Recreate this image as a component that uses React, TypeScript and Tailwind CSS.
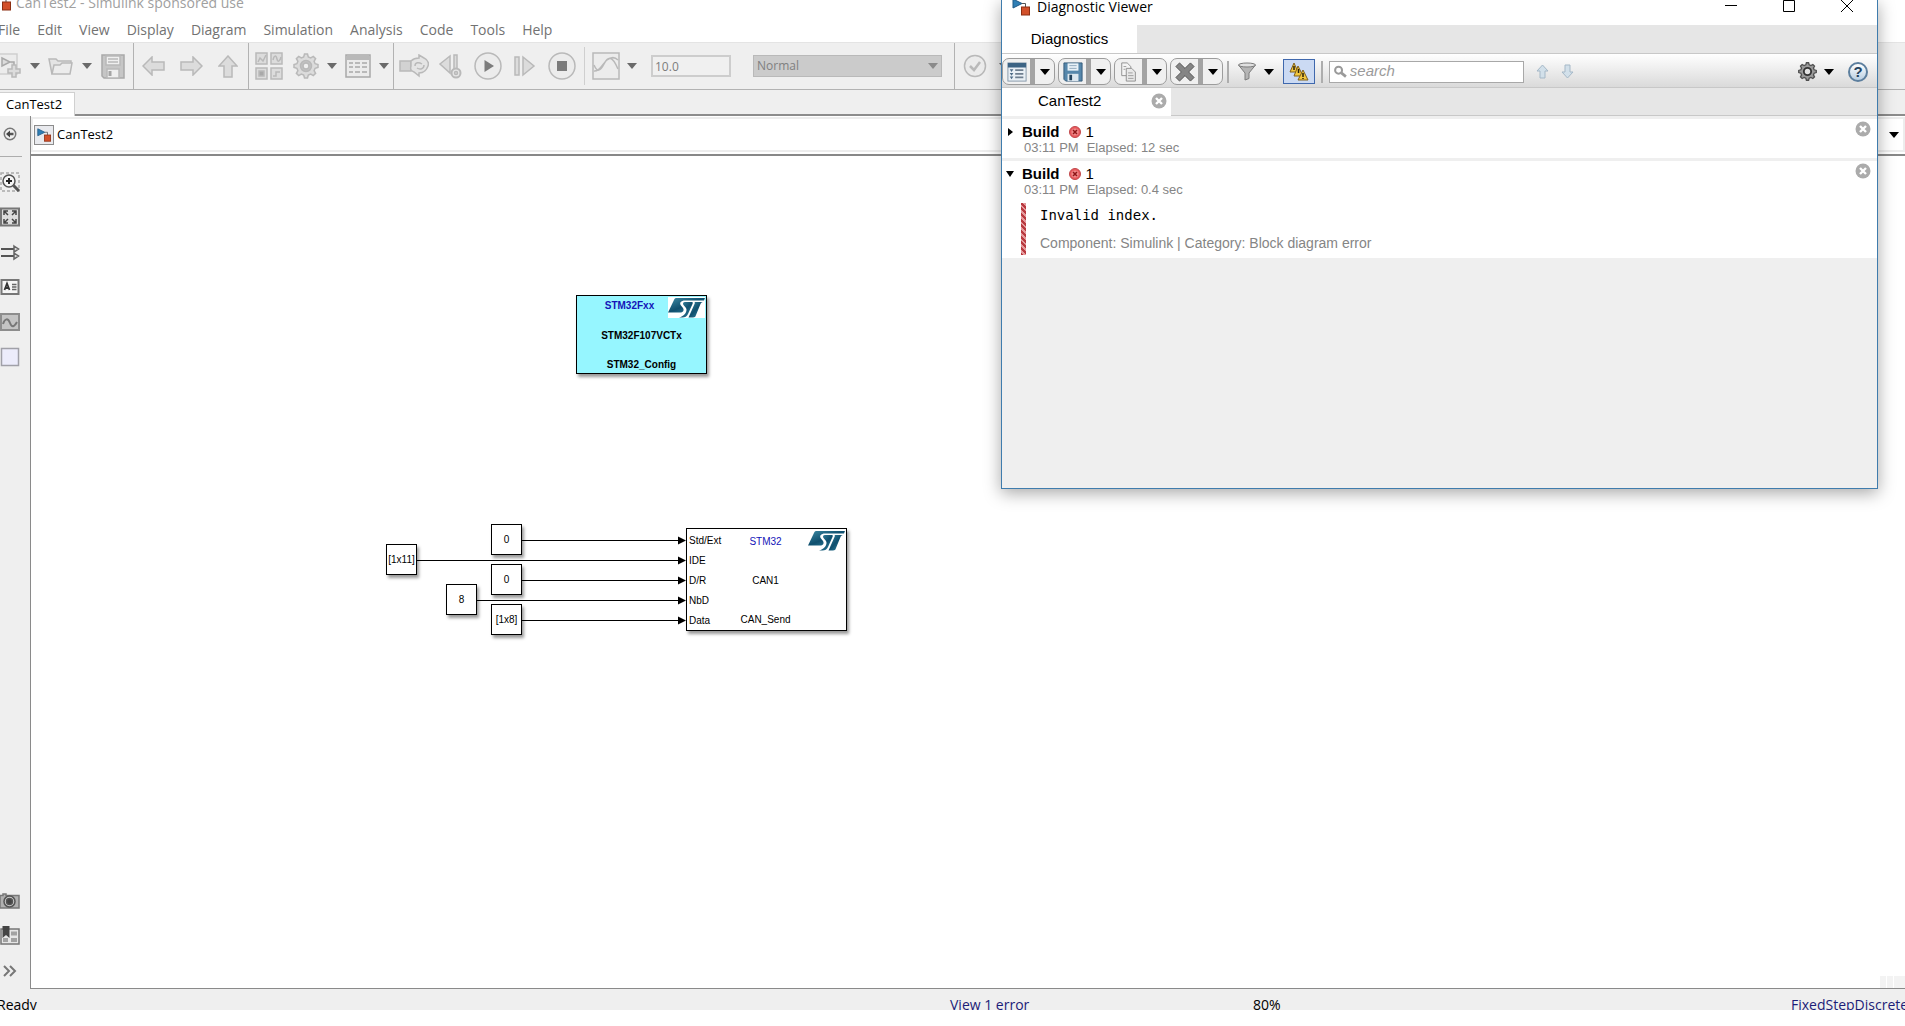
import type { ReactNode } from 'react';

const MENUS = ['File', 'Edit', 'View', 'Display', 'Diagram', 'Simulation', 'Analysis', 'Code', 'Tools', 'Help'];

/* ---------- shared icons ---------- */

function Caret({ className = 'text-[#6a6a6a]' }: { className?: string }) {
  return (
    <svg width="10" height="6" viewBox="0 0 10 6" className={className}>
      <path d="M0 0H10L5 6Z" fill="currentColor" />
    </svg>
  );
}

function ModelIcon({ size = 18 }: { size?: number }) {
  return (
    <svg width={size} height={size} viewBox="0 0 18 18" className="shrink-0">
      <path d="M1 1L10 5.5L1 10Z" fill="#2f7fb5" stroke="#1f5a86" />
      <path d="M10 5.5H13.5V9" fill="none" stroke="#555" />
      <rect x="9.5" y="9" width="8" height="8" fill="#d2502a" stroke="#8c2f12" />
    </svg>
  );
}

function CloseBadge() {
  return (
    <svg width="16" height="16" viewBox="0 0 16 16">
      <circle cx="8" cy="8" r="7.5" fill="#ababab" />
      <path d="M5 5L11 11M11 5L5 11" stroke="#fff" strokeWidth="2.4" />
    </svg>
  );
}

function ErrorBadge() {
  return (
    <svg width="12" height="12" viewBox="0 0 12 12">
      <circle cx="6" cy="6" r="5.5" fill="#e8595d" stroke="#c0484b" />
      <circle cx="6" cy="6" r="3.6" fill="#f08a8a" />
      <path d="M4 4L8 8M8 4L4 8" stroke="#8e1518" strokeWidth="1.5" />
    </svg>
  );
}

function StLogo() {
  return (
    <svg width="37" height="21" viewBox="0 0 37 21">
      <defs>
        <linearGradient id="st" x1="0" y1="0" x2="1" y2="1">
          <stop offset="0" stopColor="#3d8ba5" />
          <stop offset="0.5" stopColor="#0f4f6e" />
          <stop offset="1" stopColor="#3f93ad" />
        </linearGradient>
      </defs>
      <path d="M8 1H37L36 3.500H17C13 3.500 11 6 13 8.500L15 11C16.500 13.500 15 15.500 12 15.500H0L5.500 4C6.300 2 7 1 8 1Z" fill="url(#st)" />
      <path d="M17 5H24C25 5 25 6 24.500 7L20 17C19 19.500 17 20.500 14.500 20.500H11C16 19.500 20 14.500 18 11L15.500 8C14.500 6.500 15 5 17 5Z" fill="url(#st)" />
      <path d="M26.500 5H35C33.500 5.300 33 6 32.500 7L28 18C27.500 19.800 26.500 20.500 25 20.500H20.500L26.500 7C27 6 27 5.500 26.500 5Z" fill="url(#st)" />
    </svg>
  );
}

/* ---------- main toolbar icons, all greyed out ---------- */

function Grey({ w, h, children }: { w: number; h: number; children: ReactNode }) {
  return (
    <svg width={w} height={h} viewBox={`0 0 ${w} ${h}`} fill="#dcdcdc" stroke="#b9b9b9" strokeWidth="1.5" className="shrink-0">
      {children}
    </svg>
  );
}

const GEAR =
  'M11.500 1h3l.8 2.900 2.400 1 2.600-1.500 2.300 2.300-1.500 2.600 1 2.400 2.900.8v3l-2.900.8-1 2.400 1.500 2.600-2.300 2.300-2.600-1.500-2.400 1-.8 2.900h-3l-.8-2.900-2.400-1-2.600 1.500-2.300-2.300 1.500-2.600-1-2.400-2.900-.8v-3l2.900-.8 1-2.400-1.500-2.600 2.300-2.300 2.600 1.500 2.400-1z';

const icons: Record<string, ReactNode> = {
  New: (
    <Grey w={26} h={26}>
      <path d="M1 1H21V21H1Z" fill="#ececec" stroke="#cfcfcf" />
      <path d="M6 5L14 9L6 13Z M14 9H18V14" stroke="#a8a8a8" />
      <path d="M16 12h4v4h4v4h-4v4h-4v-4h-4v-4h4z" />
    </Grey>
  ),
  Open: (
    <Grey w={26} h={20}>
      <path d="M4 18L1 3H8L10 5H23V8" fill="#e4e4e4" />
      <path d="M4 18L6 9H12L14 7H24L22 18Z" fill="#ececec" />
    </Grey>
  ),
  Save: (
    <Grey w={24} h={25}>
      <path d="M1 1H23V24H3L1 22Z" fill="#c6c6c6" stroke="#a9a9a9" />
      <rect x="5" y="2" width="14" height="9" fill="#efefef" />
      <path d="M7 5H17M7 8H17" />
      <rect x="6" y="15" width="12" height="9" fill="#efefef" />
      <path d="M9 17V22" strokeWidth="3" stroke="#a5a5a5" />
    </Grey>
  ),
  Back: (
    <Grey w={24} h={20}>
      <path d="M1 10L10 1V6H22V14H10V19Z" />
    </Grey>
  ),
  Forward: (
    <Grey w={24} h={20}>
      <path d="M23 10L14 1V6H2V14H14V19Z" />
    </Grey>
  ),
  Up: (
    <Grey w={20} h={23}>
      <path d="M10 1L19 11H14V22H6V11H1Z" />
    </Grey>
  ),
  Library: (
    <Grey w={28} h={28}>
      <path d="M1 1H12V12H1Z M16 1H27V12H16Z M1 16H12V27H1Z M16 16H27V27H16Z" />
      <path d="M3 10L5 6L8 9L11 3M18 8C19 3 21 3 22 7S25 9 26 5M18 24H21V20H25" fill="none" />
      <rect x="4" y="19" width="5" height="5" fill="#a9a9a9" />
    </Grey>
  ),
  Settings: (
    <Grey w={26} h={26}>
      <path d={GEAR} />
      <circle cx="13" cy="13" r="5.500" fill="#c3c3c3" />
      <circle cx="13" cy="13" r="3" fill="#efefef" />
    </Grey>
  ),
  Explorer: (
    <Grey w={26} h={24}>
      <path d="M1 1H25V23H1Z" fill="#ebebeb" stroke="#a9a9a9" />
      <path d="M1 4H25" strokeWidth="4" />
      <path d="M4 9H8M10 9H15M17 9H22M4 13H8M10 13H15M17 13H22M4 18H8M10 18H15M17 18H22" strokeWidth="2" />
    </Grey>
  ),
  'Fast restart': (
    <Grey w={30} h={24}>
      <path d="M1 7H12V17H1Z" fill="#d2d2d2" />
      <path d="M12 7C14 5 16 4 20 4V1L25 4C29 6 30 9 29 12S25 19 20 19V22L15 18C12 17 11 15 12 12Z" fill="#e4e4e4" />
      <path d="M16 12C16 8 20 8 23 10M25 11C25 15 21 16 18 14" fill="none" />
    </Grey>
  ),
  'Step back': (
    <Grey w={26} h={26}>
      <path d="M12 3V20L2 11Z M16 2H19V16H16Z" />
      <circle cx="18" cy="20" r="4.500" fill="#e6e6e6" strokeWidth="2" />
      <circle cx="18" cy="20" r="1.500" />
    </Grey>
  ),
  Run: (
    <Grey w={28} h={28}>
      <circle cx="14" cy="14" r="13" fill="#ececec" />
      <path d="M10.500 8L20 14L10.500 20Z" fill="#7c7c7c" stroke="none" />
    </Grey>
  ),
  'Step forward': (
    <Grey w={22} h={22}>
      <path d="M1 2H5V20H1Z M9 2L20 11L9 20Z" />
    </Grey>
  ),
  Stop: (
    <Grey w={28} h={28}>
      <circle cx="14" cy="14" r="13" fill="#ececec" />
      <path d="M9 9H19V19H9Z" fill="#7c7c7c" stroke="none" />
    </Grey>
  ),
  Scope: (
    <Grey w={28} h={28}>
      <path d="M1 1H27V27H1Z" fill="#ececec" />
      <path d="M2 13C5 20 8 20 12 12S20 3 26 17M2 19C8 20 11 11 15 8S23 5 26 8" fill="none" />
    </Grey>
  ),
  Check: (
    <Grey w={24} h={24}>
      <circle cx="12" cy="12" r="10.500" fill="#ebebeb" />
      <path d="M7 12L11 16L17 8" fill="none" strokeWidth="2.500" />
    </Grey>
  ),
};

function Tool({ name, className = 'w-[34px]' }: { name: string; className?: string }) {
  return (
    <button aria-label={name} className={`flex h-full shrink-0 items-center justify-center ${className}`}>
      {icons[name]}
    </button>
  );
}

function ToolMenu({ label }: { label: string }) {
  return (
    <button aria-label={label} className="flex h-full w-[18px] shrink-0 items-center justify-center">
      <Caret />
    </button>
  );
}

function MainToolbar() {
  return (
    <div className="flex h-12 shrink-0 items-stretch border-t border-b border-t-[#e4e4e4] border-b-[#b2b2b2] bg-[#efefef]">
      <div className="-ml-2 flex w-[142px] border-r border-[#b2b2b2]">
        <Tool name="New" />
        <ToolMenu label="New options" />
        <Tool name="Open" />
        <ToolMenu label="Open options" />
        <Tool name="Save" />
      </div>
      <div className="flex w-[115px] border-r border-[#b2b2b2] pl-px">
        <Tool name="Back" className="w-[37px]" />
        <Tool name="Forward" className="w-[37px]" />
        <Tool name="Up" className="w-[37px]" />
      </div>
      <div className="flex w-[145px] border-r border-[#b2b2b2]">
        <Tool name="Library" className="w-[40px]" />
        <Tool name="Settings" />
        <ToolMenu label="Settings options" />
        <Tool name="Explorer" />
        <ToolMenu label="Explorer options" />
      </div>
      <div className="flex w-[190px] pl-px">
        <Tool name="Fast restart" className="w-[37px]" />
        <Tool name="Step back" className="w-[37px]" />
        <Tool name="Run" className="w-[37px]" />
        <Tool name="Step forward" className="w-[37px]" />
        <Tool name="Stop" className="w-[37px]" />
      </div>
      <div className="my-1 w-px bg-[#cfcfcf]" />
      <div className="flex w-[370px] items-center border-r border-[#b2b2b2] pl-1">
        <Tool name="Scope" />
        <ToolMenu label="Scope options" />
        <input
          aria-label="Stop time"
          defaultValue="10.0"
          className="ml-2.5 h-[22px] w-20 border-2 border-[#cdcdcd] bg-[#f0f0f0] px-0.5 text-[12px] text-[#7d7d7d]"
        />
        <div className="relative ml-[22px] h-[22px] w-[189px]">
          <select
            aria-label="Simulation mode"
            className="block h-full w-full appearance-none border border-[#b9b9b9] bg-[#cbcbcb] px-[3px] py-0 text-[12px] leading-5 text-[#808080]"
          >
            <option>Normal</option>
          </select>
          <span className="pointer-events-none absolute top-2 right-1 flex">
            <Caret className="text-[#8a8a8a]" />
          </span>
        </div>
      </div>
      <Tool name="Check" className="w-[40px]" />
      <ToolMenu label="Check options" />
    </div>
  );
}

/* ---------- palette on the left ---------- */

function Side({ label, children }: { label: string; children: ReactNode }) {
  return (
    <button aria-label={label} className="flex h-[35px] w-5 items-center justify-center">
      <svg width="20" height="20" viewBox="0 0 20 20" fill="none" stroke="#555" strokeWidth="1.5">
        {children}
      </svg>
    </button>
  );
}

function Palette() {
  return (
    <aside className="flex w-[30px] shrink-0 flex-col bg-[#efefef] pb-px">
      <Side label="Hide browser">
        <circle cx="10" cy="10" r="5.700" stroke="#777" />
        <path d="M13.500 10H8" strokeWidth="2.500" />
        <path d="M10 6.500L6 10L10 13.500Z" fill="#444" stroke="none" />
      </Side>
      <hr className="mt-[5px] mb-[7px] w-[22px] border-[#adadad]" />
      <Side label="Zoom">
        <path d="M1 1H19V19H1Z" stroke="#aaa" strokeDasharray="3 2" />
        <circle cx="9" cy="9" r="6" fill="#f6f6f6" />
        <path d="M6 9H12M9 6V12" stroke="#222" strokeWidth="2" />
        <path d="M13.500 13.500L19 19" strokeWidth="3" />
      </Side>
      <Side label="Fit to view">
        <path d="M1 1.500H19V18.500H1Z" fill="#ddd" stroke="#777" strokeWidth="2" />
        <path d="M4 8V4H8M12 4H16V8M16 12V16H12M8 16H4V12M4 4L8 8M16 4L12 8M16 16L12 12M4 16L8 12" stroke="#444" />
      </Side>
      <Side label="Sample time">
        <path d="M1 7H14M1 14H14" stroke="#555" strokeWidth="2" />
        <path d="M14 4L18.500 7L14 10Z M14 11L18.500 14L14 17Z" fill="#ddd" stroke="#666" />
      </Side>
      <Side label="Annotation">
        <rect x="1.500" y="3" width="17" height="14" fill="#f6f6f6" stroke="#777" strokeWidth="2" />
        <path d="M4.500 13L7 6.500L9.500 13M5.500 11H8.500" stroke="#333" strokeWidth="1.800" />
        <path d="M12 7.500H16.500M12 10H16.500M12 12.500H16.500" stroke="#666" />
      </Side>
      <Side label="Image">
        <rect x="1" y="2" width="18" height="16" fill="#c4c4c4" stroke="#8d8d8d" strokeWidth="2" />
        <path d="M3 12C5 6 8 6 10 11S14 15 17 10" stroke="#777" strokeWidth="2" />
      </Side>
      <Side label="Area">
        <rect x="1.500" y="1.500" width="17" height="17" fill="#ececfb" stroke="#a0a0a8" />
      </Side>
      <div className="flex-1" />
      <Side label="Screenshot">
        <path d="M0 4.500H3V3H6V4.500H19V17H0Z" fill="#b0b0b0" stroke="#777" />
        <circle cx="9.500" cy="10.500" r="5.500" fill="#cfcfcf" />
        <circle cx="9.500" cy="10.500" r="3" fill="#444" />
      </Side>
      <Side label="Bookmarks">
        <path d="M1 3H19V18H1Z" fill="#e6e6e6" stroke="#777" />
        <path d="M11 5.500H17V9.500H11Z M11 12H17V16H11Z M3 12H8V16H3Z" fill="#a2a2a2" stroke="none" />
        <path d="M2.500 0H9.500V12L6 9L2.500 12Z" fill="#444" stroke="none" />
      </Side>
      <Side label="More">
        <path d="M4 5L9 10L4 15M10 5L15 10L10 15" stroke="#777" strokeWidth="2" />
      </Side>
    </aside>
  );
}

/* ---------- block diagram ---------- */

// Positions are relative to the canvas
const constants = [
  { value: '0', x: 460, y: 368 },
  { value: '[1x11]', x: 355, y: 388 },
  { value: '0', x: 460, y: 408 },
  { value: '8', x: 415, y: 428 },
  { value: '[1x8]', x: 460, y: 448 },
];

const ports = ['Std/Ext', 'IDE', 'D/R', 'NbD', 'Data'];

function Canvas() {
  return (
    <div className="relative flex-1 overflow-hidden border-b border-[#8a8a8a] bg-white font-['Liberation_Sans',sans-serif] text-[10px] leading-3">
      <div className="absolute top-[139px] left-[545px] flex h-[79px] w-[131px] flex-col items-center justify-between border border-black bg-[#96f6ff] pt-1 pb-0.5 font-bold shadow-[2px_3px_3px_rgba(0,0,0,0.4)]">
        <span className="pr-6 text-[#1414b8]">STM32Fxx</span>
        <span>STM32F107VCTx</span>
        <span>STM32_Config</span>
        <div className="absolute top-px right-px bg-white">
          <StLogo />
        </div>
      </div>

      {constants.map((c) => (
        <div
          key={c.y}
          className="absolute flex h-[31px] w-[31px] items-center justify-center border border-black bg-white shadow-[2px_3px_3px_rgba(0,0,0,0.4)]"
          style={{ left: c.x, top: c.y }}
        >
          {c.value}
        </div>
      ))}

      <svg width="700" height="500" className="absolute top-0 left-0">
        {constants.map((c) => (
          <g key={c.y}>
            <path d={`M${c.x + 31} ${c.y + 16.5}H648`} stroke="#000" />
            <path d={`M647 ${c.y + 12.5}L655 ${c.y + 16.5}L647 ${c.y + 20.5}Z`} />
          </g>
        ))}
      </svg>

      <div className="absolute top-[372px] left-[655px] flex h-[103px] w-[161px] border border-black bg-white shadow-[2px_3px_3px_rgba(0,0,0,0.4)]">
        <div className="flex w-10 flex-col gap-2 pt-1.5 pl-0.5">
          {ports.map((p) => (
            <span key={p}>{p}</span>
          ))}
        </div>
        <div className="flex w-[77px] flex-col items-center justify-between pt-[7px] pb-1">
          <span className="text-[#1414b8]">STM32</span>
          <span>CAN1</span>
          <span>CAN_Send</span>
        </div>
        <div className="absolute top-px right-px">
          <StLogo />
        </div>
      </div>

      <div className="absolute right-0 bottom-0 flex h-3 w-[25px] gap-px">
        <span className="w-1.5 bg-[#f3f3f3]" />
        <span className="w-1.5 bg-[#f3f3f3]" />
        <span className="flex-1 bg-[#f3f3f3]" />
      </div>
    </div>
  );
}

/* ---------- diagnostic viewer window ---------- */

function SplitButton({ label, children }: { label: string; children: ReactNode }) {
  return (
    <div className="flex h-[27px] w-[53px] overflow-hidden rounded-[7px] border border-[#9c9c9c] bg-[#f0f0f0]">
      <button aria-label={label} className="flex w-[27px] items-center justify-center">
        <svg width="20" height="20" viewBox="0 0 22 22">
          {children}
        </svg>
      </button>
      <span className="w-[5px] bg-[#a3a3a3]" />
      <button aria-label={`${label} options`} className="flex flex-1 items-center justify-center">
        <Caret className="text-black" />
      </button>
    </div>
  );
}

function ViewerToolbar() {
  return (
    <div className="flex h-[35px] items-center border-y border-[#c8c8c8] bg-linear-to-b from-white to-[#dadada] pt-0.5">
      <div className="flex gap-[3px]">
        <SplitButton label="Show report">
          <rect x="1" y="1" width="20" height="20" fill="#e9eff5" stroke="#8295a8" />
          <path d="M1 3.500H21" stroke="#3c6384" strokeWidth="5" />
          <path d="M9 9H18M9 13H18M9 17H18" stroke="#6f7f90" strokeWidth="2" />
          <path d="M3 8H7L5 11Z M3 12H7L5 15Z M3 16H7L5 19Z" fill="#4d6a86" />
        </SplitButton>
        <SplitButton label="Save">
          <path d="M1 1H21V21H3L1 19Z" fill="#5687ab" stroke="#2f5776" />
          <rect x="5" y="1.500" width="12" height="8" fill="#e8f1f7" />
          <path d="M7 4H15M7 7H15" stroke="#8ba4b8" />
          <rect x="5" y="13" width="12" height="8" fill="#dbe6ee" />
          <path d="M8.500 14V20" stroke="#23425c" strokeWidth="3" />
        </SplitButton>
        <SplitButton label="Copy">
          <path d="M3 1H9L13 5V15H3Z" fill="#f4f4f4" stroke="#8c8c8c" />
          <path d="M8 7H14L18 11V21H8Z" fill="#e8e8e8" stroke="#8c8c8c" />
          <path d="M5 5H8M5 8H7M10 12H15M10 15H16M10 18H16" stroke="#999" />
        </SplitButton>
        <SplitButton label="Clear">
          <path d="M5 1L11 7L17 1L21 5L15 11L21 17L17 21L11 15L5 21L1 17L7 11L1 5Z" fill="#858585" stroke="#505050" />
        </SplitButton>
      </div>
      <span className="mx-1 h-[22px] w-0.5 bg-[#adadad]" />
      <button aria-label="Filter" className="flex w-7 items-center justify-center">
        <svg width="20" height="20" viewBox="0 0 20 20">
          <path d="M1.500 3L8 11V18L12 16.500V11L18.500 3Z" fill="#b5b5b5" stroke="#7c7c7c" />
          <ellipse cx="10" cy="3" rx="8.500" ry="2" fill="#e0e0e0" stroke="#7c7c7c" />
        </svg>
      </button>
      <button aria-label="Filter options" className="flex w-4 justify-center">
        <Caret className="text-black" />
      </button>
      <button
        aria-label="Group warnings"
        className="ml-1.5 flex h-[25px] w-8 items-center justify-center border border-[#3f68ad] bg-[#cbdaf3]"
      >
        <svg width="20" height="20" viewBox="0 0 20 20" fill="#f3c73d" stroke="#80601a">
          <path d="M5 1L9 10H1Z" />
          <path d="M9 4L14 14H5Z" />
          <path d="M14 8L19 18H9Z" />
          <path d="M5 4V8M9.500 7V11M14 11V15M14 16V17" stroke="#2a2107" strokeWidth="1.500" />
        </svg>
      </button>
      <span className="mx-1.5 h-[22px] w-0.5 bg-[#adadad]" />
      <label className="flex h-[22px] w-[195px] items-center border border-[#a8a8a8] bg-white pl-1">
        <svg width="14" height="14" viewBox="0 0 14 14" fill="none" stroke="#9a9a9a">
          <circle cx="5" cy="5" r="3.800" strokeWidth="2.200" />
          <path d="M8 8L13 12" strokeWidth="3" />
        </svg>
        <input
          aria-label="Search"
          placeholder="search"
          className="ml-[3px] w-full min-w-0 text-[15px] italic outline-none placeholder:text-[#9b9b9b]"
        />
      </label>
      <button aria-label="Previous" className="ml-3 w-[13px]">
        <svg width="13" height="15" viewBox="0 0 13 15" fill="#d2e0ea" stroke="#a5b8c7">
          <path d="M6.500 1L12 7H9V14H4V7H1Z" />
        </svg>
      </button>
      <button aria-label="Next" className="ml-3 w-[13px]">
        <svg width="13" height="15" viewBox="0 0 13 15" fill="#d2e0ea" stroke="#a5b8c7">
          <path d="M6.500 14L12 8H9V1H4V8H1Z" />
        </svg>
      </button>
      <div className="mr-[9px] ml-auto flex items-center">
        <button aria-label="Preferences">
          <svg width="19" height="19" viewBox="0 0 26 26">
            <path d={GEAR} fill="#9a9a9a" stroke="#4f4f4f" strokeWidth="1.800" />
            <circle cx="13" cy="13" r="5" fill="#e2e2e2" stroke="#333" strokeWidth="2.500" />
          </svg>
        </button>
        <button aria-label="Preferences options" className="mr-3.5 ml-[7px]">
          <Caret className="text-black" />
        </button>
        <button
          aria-label="Help"
          className="flex h-5 w-5 items-center justify-center rounded-full border-2 border-[#5d7f9e] bg-linear-to-b from-white to-[#b9cfe2] text-[15px] leading-4 font-bold text-[#25435f]"
        >
          ?
        </button>
      </div>
    </div>
  );
}

function BuildHeader({ elapsed, open = false }: { elapsed: string; open?: boolean }) {
  return (
    <div className="flex justify-between pr-1.5 pl-1">
      <div className="flex">
        <button aria-label="Toggle build" className="flex h-[26px] w-4 items-center">
          <svg width="10" height="10" viewBox="0 0 10 10">
            <path d={open ? 'M0 2H8L4 8Z' : 'M2 1L7 5L2 9Z'} />
          </svg>
        </button>
        <div className="pt-1">
          <div className="flex items-center text-[15px] leading-[18px]">
            <b>Build</b>
            <span className="mr-[5px] ml-[9px]">
              <ErrorBadge />
            </span>
            1
          </div>
          <div className="flex gap-2 pl-0.5 text-[13px] leading-[14px] text-[#858585]">
            <span>03:11 PM</span>
            <span>Elapsed: {elapsed}</span>
          </div>
        </div>
      </div>
      <button aria-label="Dismiss build" className="mt-0.5 h-4">
        <CloseBadge />
      </button>
    </div>
  );
}

function DiagnosticViewer() {
  return (
    <section className="absolute top-0 left-[1001px] flex h-[489px] w-[877px] flex-col border border-t-0 border-[#3f7cad] bg-[#efefef] font-['Liberation_Sans',sans-serif] shadow-[0_4px_16px_rgba(0,0,0,0.35)]">
      <header className="flex h-[25px] items-start justify-between bg-white font-['Open_Sans',sans-serif] text-[14px] leading-[14px]">
        <div className="-mt-0.5 flex items-center gap-[7px] pl-2.5">
          <ModelIcon size={18} />
          <span>Diagnostic Viewer</span>
        </div>
        <div className="flex gap-[46px] pr-6">
          <button aria-label="Minimize">
            <svg width="12" height="12" viewBox="0 0 12 12" stroke="#000">
              <path d="M0 5.500H12" />
            </svg>
          </button>
          <button aria-label="Maximize">
            <svg width="12" height="12" viewBox="0 0 12 12" stroke="#000" fill="none">
              <path d="M.5 .5H11.500V11.500H.5Z" />
            </svg>
          </button>
          <button aria-label="Close">
            <svg width="12" height="12" viewBox="0 0 12 12" stroke="#000">
              <path d="M0 0L12 12M12 0L0 12" />
            </svg>
          </button>
        </div>
      </header>
      <div className="flex h-7 bg-[#e6e6e6] text-[15px]">
        <div className="flex w-[135px] items-center justify-center bg-white">Diagnostics</div>
      </div>
      <ViewerToolbar />
      <div className="flex h-7 border-b border-[#c8c8c8] bg-[#e6e6e6] text-[15px]">
        <div className="-mb-px flex w-[169px] items-center justify-between bg-white pr-1 pb-0.5 pl-9">
          CanTest2
          <button aria-label="Close tab">
            <CloseBadge />
          </button>
        </div>
      </div>
      <article className="mt-[3px] h-[39px] bg-white">
        <BuildHeader elapsed="12 sec" />
      </article>
      <article className="mt-[3px] h-[97px] bg-white">
        <BuildHeader elapsed="0.4 sec" open />
        <div className="mt-1.5 ml-[19px] flex">
          <div className="h-[52px] w-[5px] bg-[repeating-linear-gradient(45deg,#b8393f_0_2px,#e59a9c_2px_4px)]" />
          <div className="ml-3.5">
            <p className="pt-0.5 font-['DejaVu_Sans_Mono',monospace] text-[14px] leading-5">Invalid index.</p>
            <p className="flex gap-1 pt-2 text-[14px] leading-5 text-[#858585]">
              <span>Component:</span>
              <span>Simulink | Category:</span>
              <span>Block diagram error</span>
            </p>
          </div>
        </div>
      </article>
    </section>
  );
}

/* ---------- page ---------- */

export default function App() {
  return (
    <div className="relative flex h-screen flex-col overflow-hidden bg-white pb-4 font-['Open_Sans',sans-serif] text-black">
      <header className="-mt-2.5 flex h-6 shrink-0 items-center gap-1 text-[14px] text-[#a0a0a0]">
        <svg width="12" height="18" viewBox="0 0 12 18">
          <path d="M6 2V9" stroke="#555" />
          <rect x="2.500" y="9" width="8" height="8" fill="#d2502a" stroke="#8c2f12" />
        </svg>
        CanTest2 - Simulink sponsored use
      </header>
      <nav className="-ml-0.5 flex h-7 shrink-0 items-center gap-[17px] pt-0.5 text-[14px] text-[#727272]">
        {MENUS.map((m) => (
          <button key={m}>{m}</button>
        ))}
      </nav>
      <MainToolbar />
      <div className="flex h-[26px] shrink-0 items-stretch bg-[#efefef] pt-0.5 text-[13px]">
        <div className="flex w-[75px] items-center border-t border-r border-[#d0d0d0] bg-white pl-1.5">CanTest2</div>
        <div className="flex-1 border-b-2 border-[#8c8c8c]" />
      </div>
      <div className="flex min-h-0 flex-1">
        <Palette />
        <main className="flex min-w-0 flex-1 flex-col border-l border-[#8a8a8a]">
          <div className="shrink-0 border-b-2 border-[#888] pt-px pb-0.5 text-[13px]">
            <div className="flex h-[35px] items-center border-2 border-[#ededed] pl-px">
              <span className="flex h-5 w-5 items-center justify-center border border-[#8c8c8c] bg-[#e9eaee]">
                <ModelIcon size={14} />
              </span>
              <span className="ml-[3px] flex-1">CanTest2</span>
              <button aria-label="Path history" className="mr-1">
                <Caret className="text-black" />
              </button>
            </div>
          </div>
          <Canvas />
        </main>
      </div>
      <footer className="-ml-[3px] grid h-[21px] shrink-0 grid-cols-[953px_303px_1fr_114px] overflow-hidden bg-[#efefef] pt-1.5 text-[14px] leading-5">
        <span>Ready</span>
        <a href="#errors" className="text-[#1c1c78]">View 1 error</a>
        <span>80%</span>
        <a href="#solver" className="text-[#1c1c78]">FixedStepDiscrete</a>
      </footer>
      <DiagnosticViewer />
    </div>
  );
}
